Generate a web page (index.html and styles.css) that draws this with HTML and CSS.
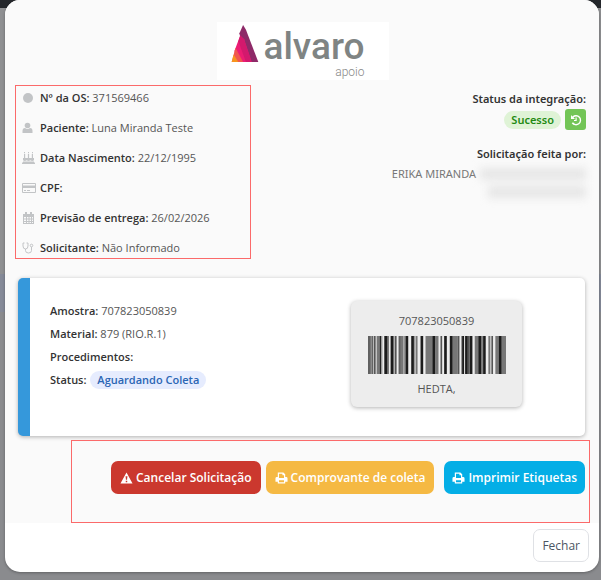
FILE: index.html
```html
<!DOCTYPE html>
<html lang="pt-BR">
<head>
    <meta charset="UTF-8">
    <meta name="viewport" content="width=device-width, initial-scale=1.0">
    <title>Solicitação - Alvaro Apoio</title>
    <link rel="stylesheet" href="styles.css">
</head>
<body>
    <div class="modal">
        <div class="modal-body">
            <div class="logo">
                <svg class="logo-symbol" viewBox="0 0 28 40" aria-hidden="true">
                    <path fill="#8e2a68" d="M12 0l3 5 13 34H17L8 9z"/>
                    <path fill="#ec1c74" d="M9 11l4 4 8 24H4L3 27z"/>
                    <path fill="#d3196d" d="M9 11l4 4 8 24h-6L7 17z"/>
                    <path fill="#f0564f" d="M4 24l8 15H0z"/>
                    <path fill="#f7941e" d="M2 31l5 8H0z"/>
                </svg>
                <div class="logo-text">
                    <span class="logo-name">alvaro</span>
                    <span class="logo-sub">apoio</span>
                </div>
            </div>

            <div class="resumo">
                <ul class="dados">
                    <li>
                        <svg viewBox="0 0 14 12"><circle cx="6" cy="6" r="5"/></svg>
                        <p><b>Nº da OS:</b> 371569466</p>
                    </li>
                    <li>
                        <svg viewBox="0 0 14 12"><circle cx="5.500" cy="3.500" r="2.800"/><path d="M.5 11V9q0-3 2.500-3Q5.500 8 8 6q2.500 0 2.500 3v2z"/></svg>
                        <p><b>Paciente:</b> Luna Miranda Teste</p>
                    </li>
                    <li>
                        <svg viewBox="0 0 14 12"><path d="M2 2h1.200v4H2zM5.900 2h1.200v4H5.900zM9.800 2H11v4H9.800zM1 6h11v2.200q-1.800 1.600-3.700 0-1.800 1.600-3.600 0Q2.800 9.800 1 8.200zM0 10.500h13V12H0zM1 9.500h11v1H1zM2 0h1v1.300H2zM6 0h1v1.300H6zM10 0h1v1.300h-1z"/></svg>
                        <p><b>Data Nascimento:</b> 22/12/1995</p>
                    </li>
                    <li>
                        <svg viewBox="0 0 14 12"><path fill-rule="evenodd" d="M1 1h12q1 0 1 1v8q0 1-1 1H1q-1 0-1-1V2q0-1 1-1zm0 1v1.500h12V2zm0 4v4h12V6zm1 2h2v1H2zm3 0h3v1H5z"/></svg>
                        <p><b>CPF:</b></p>
                    </li>
                    <li>
                        <svg viewBox="0 0 14 12"><path fill-rule="evenodd" d="M1 2h2V0h2v2h3V0h2v2h2v10H1zm1 3v1.500h2V5zm3 0v1.500h1.500V5zm2.500 0v1.500H9V5zM10 5v1.500h1V5zM2 7.500V9h2V7.500zm3 0V9h1.500V7.500zm2.500 0V9H9V7.500zm2.500 0V9h1V7.500zM2 10v1h2v-1zm3 0v1h1.500v-1zm2.500 0v1H9v-1zm2.500 0v1h1v-1z"/></svg>
                        <p><b>Previsão de entrega:</b> 26/02/2026</p>
                    </li>
                    <li>
                        <svg viewBox="0 0 14 12"><path class="traco" d="M2.500 1H1v3q0 3 2.500 3T6 4V1H4.500M3.500 7v1.500Q3.500 11 6.500 11t3-2.500V5"/><circle class="traco" cx="9.500" cy="3.500" r="1.300"/></svg>
                        <p><b>Solicitante:</b> Não Informado</p>
                    </li>
                </ul>

                <div class="integracao">
                    <b>Status da integração:</b>
                    <div class="integracao-status">
                        <span class="badge badge-sucesso">Sucesso</span>
                        <button type="button" class="btn-atualizar" aria-label="Atualizar status">
                            <svg viewBox="0 0 12 12"><path d="M1 1v4h4L3.500 3.600A3.700 3.700 0 1 1 3 8.300l-1.300.9A5.200 5.200 0 1 0 2.400 2.400zM5.500 3.500h1.200V7H4V5.900h1.500z"/></svg>
                        </button>
                    </div>
                    <b>Solicitação feita por:</b>
                    <div class="autor">
                        <span>ERIKA MIRANDA</span>
                        <div class="oculto">
                            <i></i>
                            <i></i>
                        </div>
                    </div>
                </div>
            </div>

            <div class="amostra">
                <div class="amostra-dados">
                    <p><b>Amostra:</b> 707823050839</p>
                    <p><b>Material:</b> 879 (RIO.R.1)</p>
                    <p><b>Procedimentos:</b></p>
                    <p><b>Status:</b> <span class="badge badge-aguardando">Aguardando Coleta</span></p>
                </div>
                <div class="etiqueta">
                    <span>707823050839</span>
                    <svg class="barras" viewBox="22 0 415 114" preserveAspectRatio="none" aria-hidden="true">
                        <path fill="#777" d="M28 0h4v114h-4zM48 0h9v114h-9zM62 0h3v114h-3zM82 0h3v114h-3zM121 0h8v114h-8zM131 0h6v114h-6zM165 0h6v114h-6zM195 0h22v114h-22zM226 0h8v114h-8zM275 0h16v114h-16zM343 0h12v114h-12zM362 0h5v114h-5zM384 0h6v114h-6zM405 0h10v114h-10zM424 0h13v114h-13z"/>
                        <path fill="#555" d="M39 0h6v114h-6zM102 0h6v114h-6zM114 0h3v114h-3zM160 0h2v114h-2zM240 0h5v114h-5zM291 0h6v114h-6zM303 0h6v114h-6zM322 0h4v114h-4zM367 0h4v114h-4zM393 0h5v114h-5z"/>
                        <path fill="#1c1c1c" d="M23 0h4v114h-4zM33 0h3v114h-3zM57 0h4v114h-4zM71 0h10v114H71zM90 0h9v114h-9zM117 0h3v114h-3zM136 0h7v114h-7zM152 0h8v114h-8zM180 0h8v114h-8zM216 0h9v114h-9zM251 0h8v114h-8zM268 0h8v114h-8zM306 0h5v114h-5zM314 0h8v114h-8zM327 0h9v114h-9zM354 0h8v114h-8zM369 0h7v114h-7zM415 0h9v114h-9z"/>
                    </svg>
                    <span>HEDTA,</span>
                </div>
            </div>

            <div class="acoes">
                <button type="button" class="btn btn-cancelar">
                    <svg viewBox="0 0 14 12"><path fill-rule="evenodd" d="M7 0l6.500 12H.5zM6 4l.4 4h1.200L8 4zm.2 5v1.500h1.600V9z"/></svg>
                    Cancelar Solicitação
                </button>
                <button type="button" class="btn btn-comprovante">
                    <svg viewBox="0 0 14 12"><path fill-rule="evenodd" d="M3 0h6l2 2v3h1q1.500 0 1.500 1.500V10H11v2H3v-2H.5V6.500Q.5 5 2 5h1zm1.300 1.300V6h5.400V3H8V1.300zm0 7.200v2.200h5.400V8.500z"/></svg>
                    Comprovante de coleta
                </button>
                <button type="button" class="btn btn-imprimir">
                    <svg viewBox="0 0 14 12"><path fill-rule="evenodd" d="M3 0h6l2 2v3h1q1.500 0 1.500 1.500V10H11v2H3v-2H.5V6.500Q.5 5 2 5h1zm1.300 1.300V6h5.400V3H8V1.300zm0 7.200v2.200h5.400V8.500z"/></svg>
                    Imprimir Etiquetas
                </button>
            </div>
        </div>

        <div class="modal-footer">
            <button type="button" class="btn btn-fechar">Fechar</button>
        </div>
    </div>
</body>
</html>
```

FILE: styles.css
```css
* {
    box-sizing: border-box;
}
body {
    margin: 0;
    padding: 0 2px 7px 5px;
    min-height: 100vh;
    font-family: "Open Sans", "Noto Sans", sans-serif;
    font-size: 11px;
    line-height: 20px;
    color: #555;
    background: linear-gradient(#24272b 8px, #8f9092 8px, #8f9092 274px, #858a98 274px, #858a98 312px, #8a8b8e 312px);
}
p, ul {
    margin: 0;
    padding: 0;
}
b {
    font-weight: 600;
    color: #333;
}
.modal {
    background: #fff;
    border-radius: 15px;
    overflow: hidden;
    box-shadow: 0 1px 3px rgba(0, 0, 0, 0.3);
}
.modal-body {
    padding: 22px 9px 0 10px;
    background: #fafafa;
}

/* logo */
.logo {
    display: flex;
    width: 172px;
    height: 58px;
    margin: 0 auto 5px;
    padding: 3px 24px 0 14px;
    background: #fff;
}
.logo-symbol {
    width: 28px;
    height: 38px;
}
.logo-text {
    flex: 1;
    display: flex;
    flex-direction: column;
    align-items: flex-end;
    font-family: Roboto, sans-serif;
}
.logo-name {
    font-size: 37px;
    font-weight: 500;
    line-height: 44px;
    color: #7f8483;
}
.logo-sub {
    font-size: 12px;
    font-weight: 300;
    line-height: 6px;
    color: #888;
}

/* dados do paciente */
.resumo {
    display: flex;
    justify-content: space-between;
    align-items: flex-start;
}
.dados {
    display: flex;
    flex-direction: column;
    gap: 10px;
    width: 236px;
    padding: 2px 6px 0;
    border: 1px solid #fb6a6a;
    list-style: none;
}
.dados li {
    display: flex;
    align-items: center;
    gap: 4px;
}
.dados svg {
    width: 14px;
    height: 12px;
    fill: #c2c4c6;
}
.dados .traco {
    fill: none;
    stroke: #c2c4c6;
}
.integracao {
    display: flex;
    flex-direction: column;
    align-items: flex-end;
    padding: 4px 4px 0 0;
    font-family: "Noto Sans", sans-serif;
}
.integracao-status {
    display: flex;
    align-items: center;
    gap: 4px;
    margin-bottom: 14px;
}
.badge {
    display: inline-block;
    padding: 0 7px;
    border-radius: 9px;
    font-weight: 600;
    line-height: 18px;
}
.badge-sucesso {
    color: #1f8a14;
    background: #dff3d6;
}
.badge-aguardando {
    margin-left: 1px;
    color: #2b66b4;
    background: #e6ecfe;
}
.btn-atualizar {
    display: flex;
    align-items: center;
    justify-content: center;
    width: 21px;
    height: 21px;
    padding: 0;
    border: 0;
    border-radius: 3px;
    background: #73c557;
    cursor: pointer;
}
.btn-atualizar svg {
    width: 12px;
    height: 12px;
    fill: #fff;
}
.autor {
    display: flex;
    align-items: flex-start;
    gap: 4px;
    color: #777;
}
.oculto {
    display: flex;
    flex-direction: column;
    align-items: flex-end;
    gap: 6px;
    padding-top: 4px;
    filter: blur(4px);
}
.oculto i {
    width: 106px;
    height: 12px;
    background: #e6e6e6;
}
.oculto i:last-child {
    width: 98px;
}

/* amostra */
.amostra {
    display: flex;
    justify-content: space-between;
    align-items: flex-start;
    margin: 19px 5px 4px 3px;
    padding: 21px 63px 29px 20px;
    border-left: 12px solid #3598db;
    border-radius: 5px;
    background: #fff;
    box-shadow: 0 1px 4px rgba(0, 0, 0, 0.3);
}
.amostra-dados {
    line-height: 23px;
}
.etiqueta {
    display: flex;
    flex-direction: column;
    align-items: center;
    gap: 5px;
    width: 171px;
    margin-top: 2px;
    padding: 10px 16px 8px;
    border-radius: 6px;
    background: #ededed;
    box-shadow: 0 1px 4px rgba(0, 0, 0, 0.3);
}
.barras {
    width: 138px;
    height: 38px;
}

/* botoes */
.acoes {
    display: flex;
    justify-content: flex-end;
    gap: 5px;
    margin-left: 56px;
    padding: 20px 4px 28px;
    border: 1px solid #fb6a6a;
}
.btn {
    display: flex;
    align-items: center;
    gap: 3px;
    height: 33px;
    padding: 0 8px;
    border: 1px solid transparent;
    border-radius: 7px;
    font-family: inherit;
    font-size: 12px;
    font-weight: 600;
    color: #fff;
    cursor: pointer;
}
.btn svg {
    width: 13px;
    height: 12px;
    fill: #fff;
}
.btn-cancelar {
    background: #cb382e;
}
.btn-comprovante {
    background: #f5b943;
}
.btn-imprimir {
    margin-left: 5px;
    padding: 0 7px;
    background: #04aee6;
}
.modal-footer {
    display: flex;
    justify-content: flex-end;
    padding: 6px 10px 10px;
}
.btn-fechar {
    font-weight: 400;
    color: #4b5563;
    background: #fff;
    border-color: #dfe1e5;
}
```
